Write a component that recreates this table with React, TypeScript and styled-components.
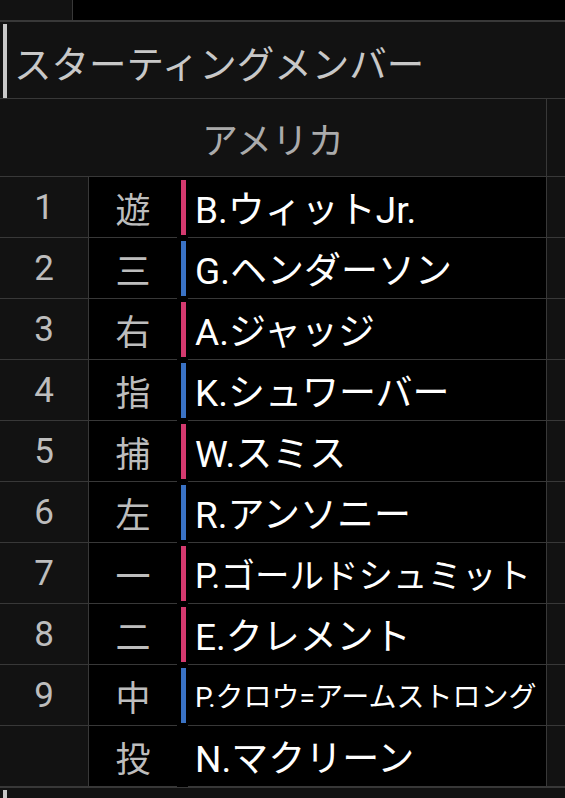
import React from 'react';
import styled, { createGlobalStyle } from 'styled-components';

const GlobalStyle = createGlobalStyle`
    html, body {
        margin: 0;
        padding: 0;
        background-color: #111111;
    }
    body {
        font-family: Roboto, "Noto Sans CJK JP", "Noto Sans", sans-serif;
        overflow: hidden;
    }
`;

const LINE = '#383838';

const Page = styled.div`
    width: 565px;
    height: 798px;
    overflow: hidden;
    background-color: #111111;
`;

const StubRow = styled.div`
    display: flex;
    height: 20px;
    border-bottom: 1px solid ${LINE};
`;

const StubLabel = styled.div`
    width: 72px;
    background-color: #121212;
    border-right: 1px solid ${LINE};
`;

const StubValue = styled.div`
    flex: 1;
    background-color: #000;
`;

const SectionHeader = styled.div`
    display: flex;
    align-items: stretch;
    height: 74px;
    padding: 2px 0 0 3px;
    box-sizing: content-box;
    border-top: 1px solid ${LINE};
    border-bottom: 1px solid ${LINE};
    background-color: #121212;
`;

const SectionBar = styled.div`
    width: 4px;
    background-color: #c8c8c8;
`;

const SectionTitle = styled.div`
    display: flex;
    align-items: center;
    padding-left: 7px;
    font-size: 37.5px;
    color: #c8c8c8;
    white-space: nowrap;
`;

const Tables = styled.div`
    display: flex;
    overflow: hidden;
`;

const TeamTable = styled.div`
    flex: 0 0 547px;
    display: grid;
    grid-template-columns: 89px 88px 11px 1fr;
    grid-template-rows: 78px;
    grid-auto-rows: 61px;
    border-right: 1px solid ${LINE};
    box-sizing: border-box;
`;

const TeamHeader = styled.div`
    grid-column: 1 / -1;
    display: flex;
    align-items: center;
    justify-content: center;
    border-bottom: 1px solid ${LINE};
    background-color: #121212;
    font-size: 36px;
    color: #ababab;
`;

const Cell = styled.div`
    display: flex;
    align-items: center;
    white-space: nowrap;
    border-bottom: 1px solid ${LINE};
`;

const OrderCell = styled(Cell)`
    justify-content: center;
    background-color: #121212;
    border-right: 1px solid ${LINE};
    font-size: 35px;
    color: #bdbdbd;
`;

const PositionCell = styled(Cell)`
    justify-content: center;
    background-color: #000;
    font-size: 35px;
    color: #bdbdbd;
`;

const BarCell = styled.div`
    display: flex;
    padding: 3px 0 3px 4px;
    background-color: #000;
`;

const HandBar = styled.div<{ color: string }>`
    width: 5px;
    background-color: ${(props) => props.color};
`;

const NameCell = styled(Cell)<{ size: number }>`
    padding-left: 7px;
    background-color: #000;
    font-size: ${(props) => props.size}px;
    color: #ffffff;
    overflow: hidden;
`;

const NextTable = styled.div`
    flex: 0 0 88px;
    display: grid;
    grid-template-rows: 78px;
    grid-auto-rows: 61px;
    background-color: #121212;
`;

const NextCell = styled.div`
    border-bottom: 1px solid ${LINE};
`;

const PINK = '#d43a6f';
const BLUE = '#3a72c4';

type Player = {
    order: string;
    position: string;
    name: string;
    bar?: string;
    size?: number;
};

const players: Player[] = [
    { order: '1', position: '遊', name: 'B.ウィットJr.', bar: PINK },
    { order: '2', position: '三', name: 'G.ヘンダーソン', bar: BLUE },
    { order: '3', position: '右', name: 'A.ジャッジ', bar: PINK },
    { order: '4', position: '指', name: 'K.シュワーバー', bar: BLUE },
    { order: '5', position: '捕', name: 'W.スミス', bar: PINK },
    { order: '6', position: '左', name: 'R.アンソニー', bar: BLUE },
    { order: '7', position: '一', name: 'P.ゴールドシュミット', bar: PINK, size: 34.5 },
    { order: '8', position: '二', name: 'E.クレメント', bar: PINK },
    { order: '9', position: '中', name: 'P.クロウ=アームストロング', bar: BLUE, size: 28 },
    { order: '', position: '投', name: 'N.マクリーン' },
];

const App: React.FC = () => {
    return (
        <Page>
            <GlobalStyle />
            <StubRow>
                <StubLabel />
                <StubValue />
            </StubRow>
            <SectionHeader>
                <SectionBar />
                <SectionTitle>スターティングメンバー</SectionTitle>
            </SectionHeader>
            <Tables>
                <TeamTable>
                    <TeamHeader>アメリカ</TeamHeader>
                    {players.map((p) => (
                        <React.Fragment key={p.position}>
                            <OrderCell>{p.order}</OrderCell>
                            <PositionCell>{p.position}</PositionCell>
                            <BarCell>{p.bar && <HandBar color={p.bar} />}</BarCell>
                            <NameCell size={p.size ?? 37}>{p.name}</NameCell>
                        </React.Fragment>
                    ))}
                </TeamTable>
                <NextTable>
                    <NextCell />
                    {players.map((p) => (
                        <NextCell key={p.position} />
                    ))}
                </NextTable>
            </Tables>
            <SectionHeader>
                <SectionBar />
                <SectionTitle />
            </SectionHeader>
        </Page>
    );
};

export default App;
